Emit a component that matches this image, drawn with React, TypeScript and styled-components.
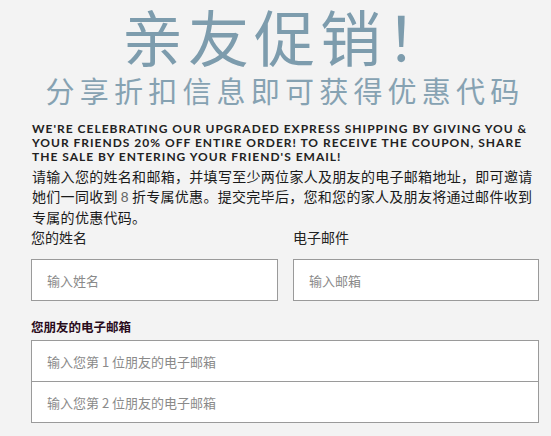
import React from 'react';
import styled, { createGlobalStyle } from 'styled-components';

const GlobalStyle = createGlobalStyle`
  html, body {
    margin: 0;
    padding: 0;
    background: #f3f3f3;
  }
  body {
    font-family: 'Noto Sans CJK SC', 'Noto Sans', sans-serif;
    color: #1f1f1f;
  }
`;

const Page = styled.div`
  width: 551px;
  height: 436px;
  overflow: hidden;
  background: #f3f3f3;
`;

const Wrapper = styled.div`
  width: 508px;
  margin-left: 31px;
  display: flex;
  flex-direction: column;
`;

const Title = styled.h1`
  margin: 1px 0 0 4px;
  font-family: 'Noto Sans CJK SC', sans-serif;
  font-weight: 400;
  font-size: 61px;
  line-height: 70px;
  letter-spacing: 5px;
  color: #7d9cad;
  text-align: center;
`;

const Subtitle = styled.h2`
  margin: -1px 0 0;
  font-family: 'Noto Sans CJK SC', sans-serif;
  font-weight: 400;
  font-size: 29px;
  line-height: 40px;
  letter-spacing: 5.2px;
  color: #86a2b2;
  text-align: center;
`;

const Promo = styled.p`
  margin: 12px 0 0 1px;
  font-family: Lato, 'Liberation Sans', sans-serif;
  font-weight: 700;
  font-size: 12px;
  line-height: 14px;
  letter-spacing: 1px;
  color: #222;
  white-space: nowrap;
`;

const Intro = styled.p`
  margin: 2px 0 0 1px;
  font-size: 14px;
  line-height: 20px;
  letter-spacing: 0.3px;
  color: #1a1a1a;
`;

const Num = styled.span`
  font-family: 'Liberation Sans', sans-serif;
  color: #666;
  padding: 0 3px;
`;

const Row = styled.div`
  display: grid;
  grid-template-columns: 247px 246px;
  column-gap: 15px;
  margin-top: 0;
`;

const Field = styled.div`
  display: flex;
  flex-direction: column;
`;

const Label = styled.label<{ $strong?: boolean }>`
  font-size: ${p => (p.$strong ? '12.5px' : '14px')};
  font-weight: ${p => (p.$strong ? 700 : 400)};
  line-height: 20px;
  color: ${p => (p.$strong ? '#2a0c1c' : '#222')};
  margin-bottom: ${p => (p.$strong ? '3px' : '12px')};
`;

const Input = styled.input<{ $joined?: boolean }>`
  box-sizing: border-box;
  width: 100%;
  height: ${p => (p.$joined ? '41px' : '42px')};
  margin: 0;
  padding: 0 15px;
  border: 1px solid #9a9a9a;
  border-top-width: ${p => (p.$joined ? 0 : 1)}px;
  background: #fff;
  font-family: 'Noto Sans CJK SC', sans-serif;
  font-size: 13px;
  color: #333;
  outline: none;

  &::placeholder {
    color: #8a8a8a;
  }
`;

const FriendBlock = styled.div`
  display: flex;
  flex-direction: column;
  margin-top: 16px;
`;

const FriendList = styled.div`
  display: flex;
  flex-direction: column;
`;

export default function App() {
  return (
    <Page>
      <GlobalStyle />
      <Wrapper>
        <Title>亲友促销！</Title>
        <Subtitle>分享折扣信息即可获得优惠代码</Subtitle>
        <Promo>
          WE'RE CELEBRATING OUR UPGRADED EXPRESS SHIPPING BY GIVING YOU &amp;
          <br />
          YOUR FRIENDS 20% OFF ENTIRE ORDER! TO RECEIVE THE COUPON, SHARE
          <br />
          THE SALE BY ENTERING YOUR FRIEND'S EMAIL!
        </Promo>
        <Intro>
          请输入您的姓名和邮箱，并填写至少两位家人及朋友的电子邮箱地址，即可邀请她们一同收到
          <Num>8</Num>折专属优惠。提交完毕后，您和您的家人及朋友将通过邮件收到专属的优惠代码。
        </Intro>
        <Row>
          <Field>
            <Label>您的姓名</Label>
            <Input placeholder="输入姓名" />
          </Field>
          <Field>
            <Label>电子邮件</Label>
            <Input placeholder="输入邮箱" />
          </Field>
        </Row>
        <FriendBlock>
          <Label $strong>您朋友的电子邮箱</Label>
          <FriendList>
            <Input placeholder="输入您第 1 位朋友的电子邮箱" />
            <Input $joined placeholder="输入您第 2 位朋友的电子邮箱" />
          </FriendList>
        </FriendBlock>
      </Wrapper>
    </Page>
  );
}
